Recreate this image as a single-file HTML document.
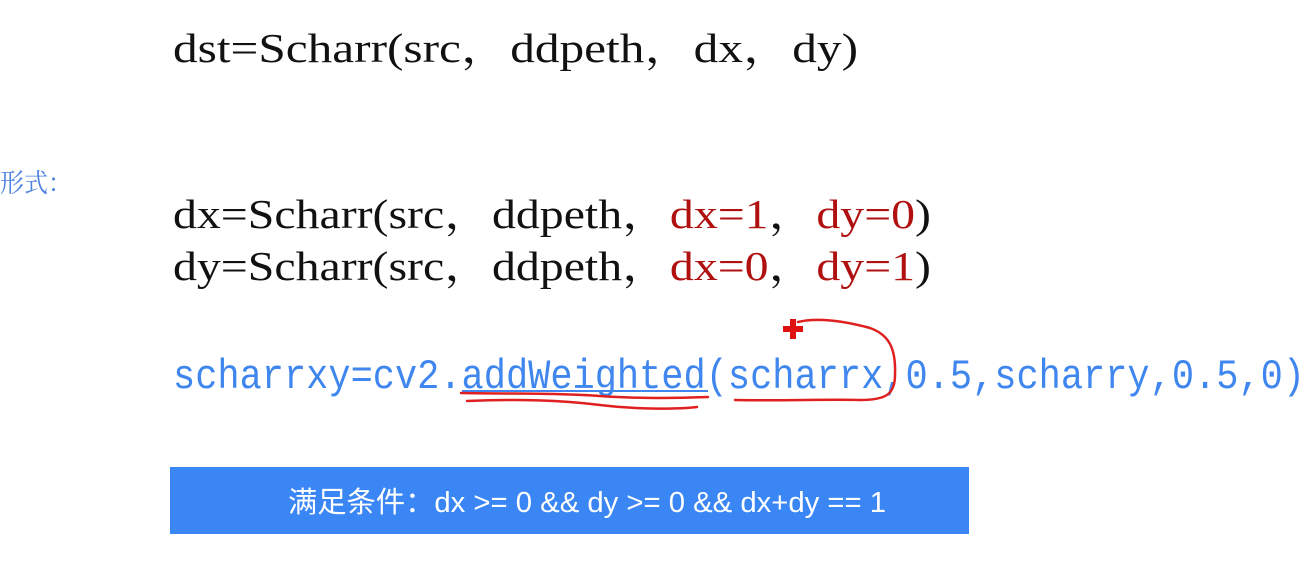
<!DOCTYPE html>
<html><head><meta charset="utf-8"><style>
html,body{margin:0;padding:0;background:#fff;width:1313px;height:561px;overflow:hidden}
</style></head><body>
<svg width="1313" height="561" xmlns="http://www.w3.org/2000/svg" style="position:absolute;left:0;top:0">
<g font-family="'Liberation Serif','Noto Serif CJK SC',serif" font-size="41" fill="#111">
<text x="173" y="62" textLength="685" lengthAdjust="spacingAndGlyphs">dst=Scharr(src，ddpeth，dx，dy)</text>
<text x="173" y="228" textLength="758" lengthAdjust="spacingAndGlyphs">dx=Scharr(src，ddpeth，<tspan fill="#b01010">dx=1</tspan>，<tspan fill="#b01010">dy=0</tspan>)</text>
<text x="173" y="280" textLength="758" lengthAdjust="spacingAndGlyphs">dy=Scharr(src，ddpeth，<tspan fill="#b01010">dx=0</tspan>，<tspan fill="#b01010">dy=1</tspan>)</text>
</g>
<text x="0" y="192" font-family="'Noto Serif CJK SC',serif" font-size="26" fill="#4a80e0" textLength="72" lengthAdjust="spacingAndGlyphs">形式：</text>
<text x="173" y="388" font-family="'Liberation Mono',monospace" font-size="42" fill="#3f86ee" textLength="1132" lengthAdjust="spacingAndGlyphs">scharrxy=cv2.addWeighted(scharrx,0.5,scharry,0.5,0)</text>
<line x1="462" y1="391" x2="708" y2="391" stroke="#3f86ee" stroke-width="2"/>
<g fill="none" stroke="#e02020" stroke-width="2.5" stroke-linecap="round">
<path d="M461 393 C520 394 560 393 600 396 C640 399 680 398 708 397"/>
<path d="M467 401 C520 399 560 400 600 405 C640 410 680 409 697 407"/>
<path d="M735 400 C780 401 830 399 860 400 C885 400 895 395 895 375 C896 350 890 335 870 328 C840 320 815 318 798 322"/>
</g>
<path d="M783 326 h7 v-7 h6 v7 h7 v6 h-7 v7 h-6 v-7 h-7z" fill="#e01010"/>
<rect x="170" y="467" width="799" height="67" fill="#3a86f5"/>
<text x="288" y="512" font-family="'Liberation Sans','Noto Sans CJK SC',sans-serif" font-size="29" fill="#fff" textLength="598" lengthAdjust="spacingAndGlyphs">满足条件：dx &gt;= 0 &amp;&amp; dy &gt;= 0 &amp;&amp; dx+dy == 1</text>
</svg>
</body></html>
